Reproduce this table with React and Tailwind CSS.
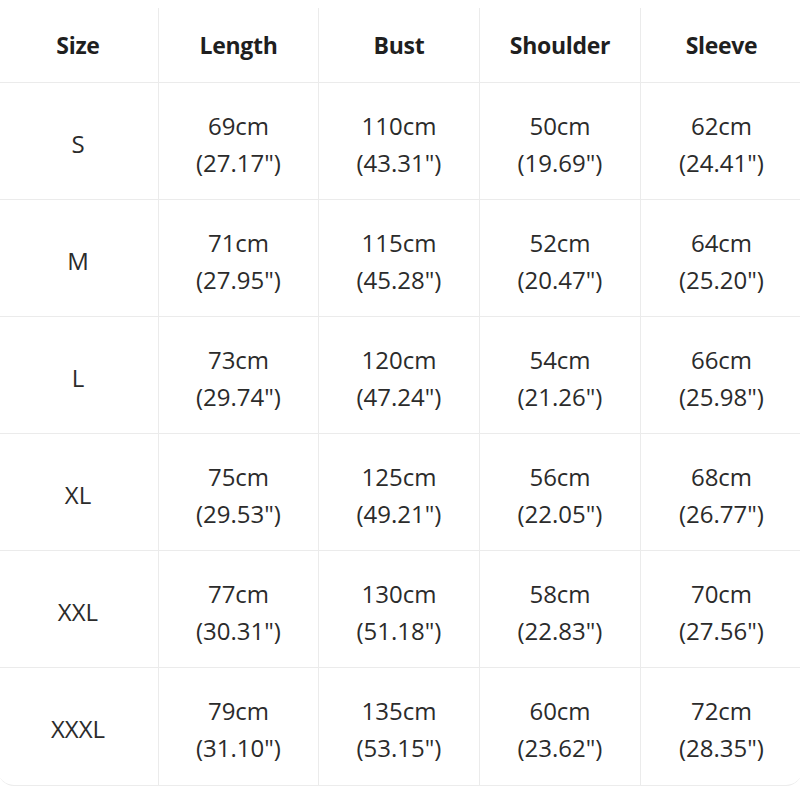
// Size chart table — centered cells, faint grid lines.
const columns = ['Size', 'Length', 'Bust', 'Shoulder', 'Sleeve']

const rows = [
  ['S', ['69cm', '(27.17")'], ['110cm', '(43.31")'], ['50cm', '(19.69")'], ['62cm', '(24.41")']],
  ['M', ['71cm', '(27.95")'], ['115cm', '(45.28")'], ['52cm', '(20.47")'], ['64cm', '(25.20")']],
  ['L', ['73cm', '(29.74")'], ['120cm', '(47.24")'], ['54cm', '(21.26")'], ['66cm', '(25.98")']],
  ['XL', ['75cm', '(29.53")'], ['125cm', '(49.21")'], ['56cm', '(22.05")'], ['68cm', '(26.77")']],
  ['XXL', ['77cm', '(30.31")'], ['130cm', '(51.18")'], ['58cm', '(22.83")'], ['70cm', '(27.56")']],
  ['XXXL', ['79cm', '(31.10")'], ['135cm', '(53.15")'], ['60cm', '(23.62")'], ['72cm', '(28.35")']],
]

const gridCls = 'grid grid-cols-[160px_160px_161px_161px_1fr]'

export default function App() {
  return (
    <div
      className="h-[800px] w-[800px] overflow-hidden bg-white pt-2"
      style={{ fontFamily: '"Open Sans", "Noto Sans", sans-serif' }}
    >
      <div className="-mx-[2px] rounded-b-2xl border-b border-[#ececec] text-[#2b2b2b]">
        <div className={`${gridCls} h-[75px] border-b border-[#ebebeb]`}>
          {columns.map((c, i) => (
            <div
              key={c}
              className={`flex items-center justify-center pt-[1px] text-[23px] font-bold tracking-[-0.3px] text-[#1f1f1f] ${
                i > 0 ? 'border-l border-[#ebebeb]' : ''
              }`}
            >
              {c}
            </div>
          ))}
        </div>
        {rows.map(([size, ...cells], r) => (
          <div
            key={size}
            className={`${gridCls} h-[117px] ${r < rows.length - 1 ? 'border-b border-[#ebebeb]' : ''}`}
          >
            <div className="flex items-center justify-center pt-[5px] text-[24px]">{size}</div>
            {cells.map(([cm, inch], i) => (
              <div
                key={i}
                className="flex flex-col items-center justify-center border-l border-[#ebebeb] pt-[5px] text-[24px] leading-[37px]"
              >
                <span>{cm}</span>
                <span>{inch}</span>
              </div>
            ))}
          </div>
        ))}
      </div>
    </div>
  )
}
